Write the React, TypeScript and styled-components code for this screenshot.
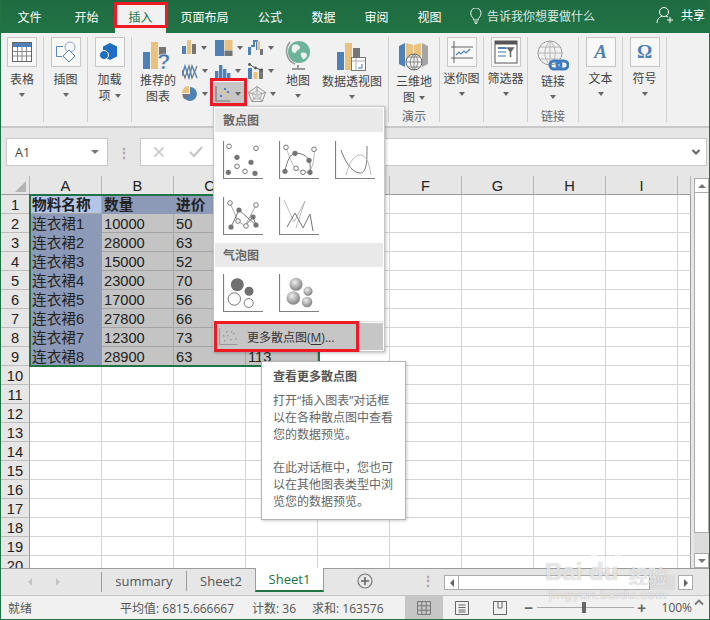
import React from "react";
import styled, { createGlobalStyle } from "styled-components";

const UI = `"Open Sans", "Noto Sans CJK SC", sans-serif`;
const CELL = `"Liberation Sans", "Noto Sans CJK SC", sans-serif`;
const GREEN = "#217346";
const BLUE = "#4f81b8";
const GOLD = "#e9c27f";
const GREY = "#757575";

const Global = createGlobalStyle`
  html, body { margin: 0; padding: 0; background: #fff; }
  * { box-sizing: border-box; }
`;

const Window = styled.div`
  position: relative; width: 710px; height: 620px; overflow: hidden;
  display: flex; flex-direction: column;
  border: 1px solid ${GREEN}; border-top: 0;
  font-family: ${UI}; font-size: 12px; color: #444; background: #e6e6e6;
`;
const TabBar = styled.div`
  height: 33px; flex: none; display: flex; background: ${GREEN}; color: #fff; align-items: stretch;
  background-image: linear-gradient(#1f6b41, ${GREEN});
`;
const Tab = styled.div<{ $w: number; $active?: boolean }>`
  width: ${(p) => p.$w}px; flex: none; display: flex; align-items: center; justify-content: center;
  padding-bottom: 3px; margin-top: 3px;
  background: ${(p) => (p.$active ? "#f1f1f1" : "transparent")};
  color: ${(p) => (p.$active ? GREEN : "#fff")};
`;
const TellMe = styled.div`
  display: flex; align-items: center; gap: 5px; margin-left: 14px; color: #dbe9e0; padding-top: 1px; padding-bottom: 3px;
`;
const Share = styled.div`
  margin-left: auto; display: flex; align-items: center; gap: 7px; padding: 0 4px 3px 0;
`;
const Ribbon = styled.div`
  height: 95px; flex: none; display: flex; padding-top: 4px; background: #f1f1f1;
  border-bottom: 2px solid #c9c9c9;
`;
const Group = styled.div<{ $w: number }>`
  position: relative; width: ${(p) => p.$w}px; flex: none; height: 85px;
  display: flex; flex-direction: column; align-items: center;
  border-right: 1px solid #d0d0d0;
`;
const ChartGroup = styled(Group)`
  flex-direction: row; align-items: flex-start; padding-left: 4px;
`;
const Big = styled.div<{ $w: number }>`
  width: ${(p) => p.$w}px; flex: none; display: flex; flex-direction: column; align-items: center;
`;
const BoxBtn = styled.div`
  width: 30px; height: 30px; display: flex; align-items: center; justify-content: center;
  background: #f8f8f8; border: 1px solid #c6c6c6; flex: none;
`;
const IconSlot = styled.div`
  height: 34px; display: flex; align-items: flex-end; justify-content: center; flex: none;
`;
const RecommendSlot = styled.div`
  height: 34px; padding-top: 5px; flex: none; display: flex; justify-content: center;
`;
const Label = styled.div<{ $top?: number }>`
  margin-top: ${(p) => p.$top ?? 2}px; line-height: 16px; text-align: center; white-space: nowrap; color: #444;
  display: flex; align-items: center; gap: 4px; justify-content: center;
`;
const Caret = styled.i`
  display: block; width: 0; height: 0; flex: none;
  border-left: 3.5px solid transparent; border-right: 3.5px solid transparent; border-top: 4px solid #666;
`;
const BlockCaret = styled(Caret)`
  margin-top: 5px;
`;
const GroupTitle = styled.div`
  position: absolute; bottom: -3px; left: 0; right: 0; text-align: center; line-height: 16px; color: #666;
`;
const SmallGrid = styled.div`
  width: 95px; flex: none; display: grid; grid-template-columns: 33px 33px 29px; grid-auto-rows: 23px;
  margin: -1px 0 0 1px;
`;
const SmallBtn = styled.div<{ $on?: boolean }>`
  display: flex; align-items: center; gap: 4px; padding-left: 1px;
  background: ${(p) => (p.$on ? "#c6c6c6" : "transparent")};
`;
const GlyphA = styled.span`
  font: italic bold 19px "Liberation Serif", serif; color: ${BLUE};
`;
const GlyphO = styled.span`
  font: bold 19px "Liberation Serif", serif; color: ${BLUE};
`;
const Collapse = styled.div`
  position: absolute; right: 5px; bottom: 9px;
`;

const FormulaRow = styled.div`
  height: 48px; flex: none; display: flex; align-items: flex-start; padding: 10px 2px 0 5px; background: #e6e6e6;
`;
const NameBox = styled.div`
  width: 102px; height: 28px; background: #fff; border: 1px solid #c6c6c6; display: flex; align-items: center;
  justify-content: space-between; padding: 0 8px; color: #444; font-size: 12.5px;
`;
const Dots = styled.div`
  width: 32px; flex: none; display: flex; align-items: center; justify-content: center; height: 28px;
  color: #aaa; font-size: 14px; font-weight: bold;
`;
const FormulaBox = styled.div`
  flex: 1; height: 28px; background: #fff; border: 1px solid #c6c6c6; display: flex; align-items: center;
  padding: 0 5px 0 12px; gap: 24px;
`;
const FormulaEnd = styled.span`
  margin-left: auto; display: flex;
`;

const SheetArea = styled.div`
  height: 392px; flex: none; position: relative; display: flex; background: #e6e6e6;
`;
const SheetGrid = styled.div`
  width: 690px; flex: none; display: grid; overflow: hidden; height: 392px; align-content: start;
  grid-template-columns: 29px repeat(9, 72px) 13px; grid-auto-rows: 19px;
  font-family: ${CELL}; font-size: 14.67px; color: #222;
`;
const Corner = styled.div`
  background: #e6e6e6; border-right: 1px solid #b5b5b5; border-bottom: 1px solid #9b9b9b;
  display: flex; align-items: flex-end; justify-content: flex-end; padding: 0 3px 2px 0;
`;
const Triangle = styled.i`
  display: block; width: 0; height: 0; border-left: 11px solid transparent; border-bottom: 11px solid #b4b4b4;
`;
const ColHead = styled.div`
  background: #e6e6e6; border-right: 1px solid #b5b5b5; border-bottom: 1px solid #9b9b9b;
  display: flex; align-items: center; justify-content: center; padding-top: 1px;
`;
const RowHead = styled.div`
  background: #e6e6e6; border-right: 1px solid #9b9b9b; border-bottom: 1px solid #bdbdbd;
  display: flex; align-items: center; justify-content: center; padding-top: 1px;
`;
const Cell = styled.div<{ $bg: string; $line: string; $bold?: boolean }>`
  background: ${(p) => p.$bg}; border-right: 1px solid ${(p) => p.$line}; border-bottom: 1px solid ${(p) => p.$line};
  padding: 1px 0 0 2px; line-height: 18px; white-space: nowrap; overflow: hidden;
  font-weight: ${(p) => (p.$bold ? 700 : 400)};
`;
const EndCell = styled.div`
  background: #fff; border-right: 1px solid #9b9b9b; border-bottom: 1px solid #d4d4d4;
`;
const Selection = styled.div`
  position: absolute; left: 28px; top: 18px; width: 291px; height: 173px; border: 2px solid ${GREEN}; pointer-events: none;
`;
const VScroll = styled.div`
  flex: 1; display: flex; flex-direction: column; padding: 2px 2px 0 3px; position: relative;
`;
const ScrollBtn = styled.div`
  width: 15px; height: 15px; flex: none; background: #fff; border: 1px solid #ababab; display: flex; align-items: center; justify-content: center;
`;
const VThumb = styled.div`
  width: 15px; height: 340px; flex: none; background: #fff; border: 1px solid #ababab; border-top: 0;
`;
const VTrack = styled.div`
  width: 15px; flex: 1; background: #dcdcdc;
`;
const Up = styled.i`
  display: block; width: 0; height: 0; border-left: 4px solid transparent; border-right: 4px solid transparent; border-bottom: 4px solid #777;
`;
const Down = styled(Up)`
  border-bottom: 0; border-top: 4px solid #777;
`;
const Left = styled.i`
  display: block; width: 0; height: 0; border-top: 4px solid transparent; border-bottom: 4px solid transparent; border-right: 4px solid #666;
`;
const Right = styled(Left)`
  border-right: 0; border-left: 4px solid #666;
`;
const SheetBar = styled.div`
  height: 28px; flex: none; display: flex; background: #e6e6e6; border-top: 1px solid #9b9b9b; border-bottom: 1px solid #c6c6c6;
  position: relative; padding-bottom: 3px; align-items: stretch;
`;
const NavArrows = styled.div`
  width: 101px; flex: none; display: flex; align-items: center; gap: 24px; padding-left: 27px; border-right: 1px solid #9b9b9b; margin: 3px 0 0;
  & > i { border-right-color: #c4c4c4; border-left-color: #c4c4c4; }
`;
const SheetTab = styled.div<{ $active?: boolean; $w: number; $sep?: boolean }>`
  width: ${(p) => p.$w}px; flex: none; display: flex; align-items: center; justify-content: center; font-size: 13px;
  color: ${(p) => (p.$active ? GREEN : "#555")};
  background: ${(p) => (p.$active ? "#fff" : "transparent")};
  border-bottom: ${(p) => (p.$active ? `2px solid ${GREEN}` : "2px solid transparent")};
  border-right: ${(p) => (p.$sep ? "1px solid #9b9b9b" : "0")};
  ${(p) => (p.$active ? "margin-top:-1px; margin-bottom: 0; border-left:1px solid #9b9b9b; border-right:1px solid #9b9b9b;" : "margin-top: 2px;")}
`;
const AddSheet = styled.div`
  margin-left: 33px; display: flex; align-items: center;
`;
const VDots = styled.div`
  margin-left: 52px; width: 6px; display: flex; align-items: center; justify-content: center; color: #aaa; font-size: 14px; font-weight: bold;
`;
const HScroll = styled.div`
  position: absolute; left: 443px; top: 6px; width: 249px; height: 15px; display: flex;
`;
const HThumb = styled.div`
  width: 191px; background: #fff; border: 1px solid #ababab; border-left: 0;
`;
const HTrack = styled.div`
  flex: 1; background: #dcdcdc; margin-right: 3px;
`;
const Status = styled.div`
  height: 23px; flex: none; display: flex; align-items: center; background: #f1f1f1; color: #555; padding-left: 7px;
`;
const StatusStat = styled.span<{ $ml: number }>`
  margin-left: ${(p) => p.$ml}px; white-space: nowrap;
`;
const ViewBtn = styled.div<{ $on?: boolean; $ml?: number }>`
  width: 38px; height: 23px; flex: none; display: flex; align-items: center; justify-content: center;
  margin-left: ${(p) => p.$ml ?? 0}px; background: ${(p) => (p.$on ? "#c6c6c6" : "transparent")};
`;
const Zoomer = styled.div`
  display: flex; align-items: center; margin-left: 5px; width: 123px; flex: none; gap: 3px; color: #555;
`;
const ZoomSign = styled.span`
  font: bold 15px "Liberation Sans", sans-serif; color: #666; line-height: 1; width: 10px; text-align: center;
`;
const ZoomTrack = styled.div`
  flex: 1; height: 1px; background: #aaa; position: relative;
`;
const ZoomThumb = styled.i`
  position: absolute; left: 45px; top: -5px; width: 4px; height: 11px; background: #666;
`;
const Percent = styled.span`
  margin-left: 15px; font-size: 12px;
`;

const Menu = styled.div`
  position: absolute; left: 212px; top: 106px; width: 172px; height: 246px; background: #fff;
  border: 1px solid #c6c6c6; box-shadow: 1px 1px 3px rgba(0,0,0,.25); padding-top: 1px; display: flex; flex-direction: column; z-index: 3;
`;
const MenuHeader = styled.div`
  height: 24px; flex: none; background: #e9e9e9; margin: 0 1px; padding-left: 8px; display: flex; align-items: center;
  font-weight: 700; color: #666;
`;
const MenuIcons = styled.div<{ $pt: number; $pb: number }>`
  display: grid; grid-template-columns: repeat(3, 40px); column-gap: 16px; row-gap: 18px;
  padding: ${(p) => p.$pt}px 0 ${(p) => p.$pb}px 9px; flex: none;
`;
const MenuSep = styled.div`
  height: 1px; flex: none; background: #e0e0e0; margin: 0 1px;
`;
const MenuMore = styled.div`
  flex: 1; margin: 1px; background: #c6c6c6; display: flex; align-items: center; gap: 8px; padding-left: 4px; color: #333; white-space: nowrap;
  & u { text-underline-offset: 2px; }
`;
const Tip = styled.div`
  position: absolute; left: 260px; top: 361px; width: 145px; height: 159px; background: #fff; border: 1px solid #b4b4b4;
  box-shadow: 1px 1px 3px rgba(0,0,0,.2); padding: 6px 11px; line-height: 17px; color: #666; z-index: 4;
`;
const TipTitle = styled.div`
  font-weight: 700; color: #555; margin-bottom: 7px;
`;
const TipPara = styled.div`
  margin-bottom: 16px; white-space: nowrap;
`;
const RedBox = styled.div<{ $x: number; $y: number; $w: number; $h: number }>`
  position: absolute; left: ${(p) => p.$x}px; top: ${(p) => p.$y}px; width: ${(p) => p.$w}px; height: ${(p) => p.$h}px;
  border: 3px solid #ed1c24; z-index: 5; pointer-events: none;
`;
const Watermark = styled.div`
  position: absolute; left: 544px; top: 544px; width: 130px; height: 60px; z-index: 6; pointer-events: none;
  color: rgba(255,255,255,.7); text-shadow: 0 0 1px rgba(110,110,110,.55);
`;
const WmBrand = styled.div`
  position: absolute; left: 0; top: 14px; font: bold 24px "Liberation Sans", sans-serif; line-height: 28px; white-space: nowrap;
`;
const WmCn = styled.div`
  position: absolute; left: 84px; top: 22px; font: bold 19px "Noto Sans CJK SC", sans-serif; white-space: nowrap; line-height: 20px;
`;
const WmUrl = styled.div`
  position: absolute; left: 4px; top: 43px; font: 13px "Liberation Sans", sans-serif; line-height: 15px; letter-spacing: .8px; white-space: nowrap;
`;
const WmPaw = styled.svg`
  position: absolute; left: 40px; top: 0;
`;

/* ---------- icons ---------- */
const I = ({ s = 16, h, children }: { s?: number; h?: number; children: React.ReactNode }) => (
  <svg width={s} height={h ?? s} viewBox={`0 0 ${s} ${h ?? s}`} fill="none">{children}</svg>
);
const TableIcon = () => (
  <I s={22}>
    <rect x="1.5" y="1.5" width="19" height="19" fill="#fff" stroke="#666" />
    <rect x="2" y="2" width="18" height="4" fill="#4f81b8" />
    <path d="M2 10.5h18M2 15h18M6.5 6v14M11 6v14M15.5 6v14" stroke="#888" />
  </I>
);
const ShapesIcon = () => (
  <I s={22}>
    <path d="M8 5.5H1.5v10H7" stroke="#5b88b8" />
    <circle cx="15" cy="6" r="5" stroke="#8cabcb" />
    <path d="M14 9l6 6-6 6-6-6z" fill="#fff" stroke="#4f81b8" />
  </I>
);
const AddinIcon = () => (
  <I s={22}>
    <path d="M11 2l7 3.5v10L11 19l-7-3.5v-10z" fill="#1f6fc0" />
    <circle cx="5" cy="14" r="4.5" fill="#1f6fc0" stroke="#f8f8f8" />
  </I>
);
const RecommendIcon = () => (
  <I s={30} h={28}>
    <rect x="0" y="10" width="7" height="17" fill={BLUE} />
    <rect x="8" y="0" width="7" height="27" fill={GOLD} />
    <rect x="16" y="5" width="7" height="8" fill={GREY} />
    <text x="14" y="27" fontFamily="Liberation Sans" fontWeight="700" fontSize="22" fill="#3f75ad" stroke="#f1f1f1" strokeWidth=".5">?</text>
  </I>
);
const Bars = () => (
  <I s={15}>
    <rect x="0" y="6" width="4" height="8" fill={BLUE} />
    <rect x="5" y="0" width="4" height="14" fill={GOLD} />
    <rect x="10" y="4" width="4" height="10" fill={GREY} />
  </I>
);
const Tree = () => (
  <I s={18} h={16}>
    <rect x="0" y="0" width="9" height="16" fill={BLUE} />
    <rect x="9.5" y="0" width="8" height="10" fill={GOLD} />
    <rect x="9.5" y="10.5" width="8" height="5.5" fill={GREY} />
  </I>
);
const Water = () => (
  <I s={16}>
    <rect x="0" y="7" width="3" height="8" fill={BLUE} />
    <path d="M3 6h3V1h3v9" stroke={BLUE} strokeWidth="2" fill="none" />
    <rect x="9" y="1" width="3" height="9" fill={GOLD} />
    <rect x="12" y="9" width="3" height="6" fill={GREY} />
  </I>
);
const LineZ = () => (
  <I s={16} h={18}>
    <path d="M0 8l3 8 4-12 3 12 5-12" stroke={GREY} strokeWidth="1.2" />
    <path d="M0 14l3-10 4 12 3-12 5 12" stroke={BLUE} strokeWidth="1.4" />
  </I>
);
const Hist = () => (
  <I s={16}>
    <rect x="0" y="8" width="3.4" height="7" fill={BLUE} />
    <rect x="4" y="2" width="3.4" height="13" fill={BLUE} />
    <rect x="8" y="6" width="3.4" height="9" fill={BLUE} />
    <rect x="12" y="10" width="3.4" height="5" fill={BLUE} />
  </I>
);
const Combo = () => (
  <I s={16}>
    <rect x="0" y="5" width="4" height="11" fill={BLUE} />
    <rect x="5.5" y="9" width="4" height="7" fill={GOLD} />
    <rect x="11" y="6" width="4" height="10" fill={GREY} />
    <path d="M1 1l6 4 7 2" stroke="#555" strokeWidth="1" />
    <circle cx="1.5" cy="1.5" r="1.4" fill="#555" /><circle cx="7.5" cy="5" r="1.4" fill="#555" /><circle cx="13.5" cy="7" r="1.4" fill="#555" />
  </I>
);
const Pie = () => (
  <I s={16}>
    <path d="M8 8V1a7 7 0 1 1-7 7.5z" fill={BLUE} />
    <path d="M7 7V0a7 7 0 0 0-7 7z" fill={GOLD} />
    <path d="M0.4 8H7l-4.5 5.3A7 7 0 0 1 .4 8z" fill={GREY} />
  </I>
);
const ScatterSmall = () => (
  <I s={16}>
    <path d="M1 0v15h14" stroke="#777" strokeWidth="1.2" />
    <rect x="5" y="4" width="2" height="2" fill={GOLD} />
    <rect x="9" y="2" width="2" height="2" fill={BLUE} />
    <rect x="12" y="5" width="2" height="2" fill={BLUE} />
    <rect x="5" y="9" width="2" height="2" fill={BLUE} />
    <rect x="9" y="6" width="2" height="2" fill={GOLD} />
    <rect x="12" y="9" width="2" height="2" fill={GOLD} />
  </I>
);
const Radar = () => (
  <I s={18} h={16}>
    <path d="M9 .5l8.500 6-3.200 9H3.700L.5 6.500z" stroke="#8a8a8a" strokeWidth=".9" />
    <path d="M9 4l5 3.500-1.900 5.500H5.900L4 7.500z" stroke="#a0a0a0" strokeWidth=".8" />
    <path d="M9 .5V9M17.500 6.500L9 9M14.300 15.500L9 9M3.700 15.500L9 9M.5 6.500L9 9" stroke="#8a8a8a" strokeWidth=".8" />
    <path d="M9 7l2.500 2-1 2.500h-3l-1-2.500z" fill="#c8c8c8" />
  </I>
);
const Globe = ({ size = 26 }: { size?: number }) => (
  <svg width={size} height={size + 6} viewBox="0 0 26 32" fill="none">
    <circle cx="14" cy="13" r="11" fill="#6db39a" />
    <path d="M8 6c4-2 6 0 7 2s-3 3-4 5-3 1-4-1 0-5 1-6zM16 14c3-1 6 0 6 2s-3 5-4 4-3-5-2-6z" fill="#f1f1f1" />
    <path d="M5 3C-1 10 1 21 10 25" stroke="#999" strokeWidth="1.6" />
    <path d="M13 26v3M7 30h13" stroke="#999" strokeWidth="2" />
  </svg>
);
const PivotIcon = () => (
  <I s={30} h={28}>
    <rect x="0" y="9" width="7" height="18" fill={BLUE} />
    <rect x="8" y="0" width="7" height="27" fill={GOLD} />
    <rect x="16" y="5" width="7" height="9" fill={GREY} />
    <rect x="14.5" y="14.5" width="14" height="13" fill="#fff" stroke="#777" />
    <path d="M15 18h13M19 15v12" stroke="#aaa" />
    <path d="M21 25h4v-4" stroke="#3f75ad" />
  </I>
);
const Map3D = () => (
  <I s={30} h={29}>
    <path d="M0 4l6-3v24l-6-3z" fill={BLUE} />
    <path d="M7 1l7 2v18H7z" fill={GOLD} />
    <path d="M15 3l7-2v20h-7z" fill={GOLD} />
    <path d="M23 1l6 3v18l-6 3z" fill="#a5a5a5" />
    <circle cx="15" cy="20" r="8" fill="#f1f1f1" stroke="#666" />
    <path d="M7 20h16M15 12v16M9 15h12M9 25h12M15 12c-5 5-5 11 0 16M15 12c5 5 5 11 0 16" stroke="#777" strokeWidth=".8" />
  </I>
);
const Spark = () => (
  <I s={22}>
    <path d="M3 0v22M0 6h22M0 17h22" stroke="#555" strokeWidth=".9" />
    <path d="M5 14l3-3 2 2 3-3 2 2 4-4" stroke="#4f81b8" strokeWidth="1.1" />
  </I>
);
const Slicer = () => (
  <I s={24}>
    <rect x="1" y="1" width="22" height="22" fill="#fff" stroke="#555" />
    <rect x="1" y="1" width="22" height="3.5" fill="#555" />
    <rect x="4" y="7" width="12" height="2" fill="#4f81b8" />
    <rect x="4" y="11" width="8" height="2" fill="#9dbbd8" />
    <rect x="4" y="15" width="8" height="2" fill="#9dbbd8" />
    <path d="M12 7h9l-3.5 5v6l-2-1v-5z" fill="#666" stroke="#fff" strokeWidth=".5" />
  </I>
);
const LinkIcon = () => (
  <I s={32} h={31}>
    <circle cx="13" cy="13" r="12" stroke="#999" fill="#f1f1f1" />
    <path d="M1 13h24M13 1v24M3 7h20M3 19h20M13 1c-7 7-7 17 0 24M13 1c7 7 7 17 0 24" stroke="#aaa" strokeWidth=".8" />
    <rect x="13" y="21" width="11" height="8" rx="4" fill="none" stroke="#3f7cbd" strokeWidth="3" />
    <rect x="20" y="21" width="11" height="8" rx="4" fill="none" stroke="#3f7cbd" strokeWidth="3" />
  </I>
);
const Bulb = () => (
  <I s={12} h={16}>
    <path d="M3.500 10.500C1 8.500.8 6 .8 5a5 5 0 0 1 10.200 0c0 1-.3 3.500-2.700 5.500V12H3.500z" stroke="#e9f1ec" />
    <path d="M4 14h4M5 15.500h2" stroke="#e9f1ec" />
  </I>
);
const User = () => (
  <I s={18}>
    <circle cx="8" cy="6" r="4.500" stroke="#fff" />
    <path d="M1 17c0-4 2.500-6 5-7M10 10l2 1M14 11v6M11 14h6" stroke="#fff" />
  </I>
);
const XMark = () => (
  <I s={12}><path d="M1.500 1.500l9 9M10.500 1.500l-9 9" stroke="#c4c4c4" strokeWidth="1.600" /></I>
);
const Check = () => (
  <I s={14} h={12}><path d="M1 6l4 4 8-9" stroke="#c4c4c4" strokeWidth="2" /></I>
);
const Chevron = () => (
  <I s={10} h={7}><path d="M1.500 1l3.500 3.500L8.500 1" stroke="#666" strokeWidth="2" /></I>
);
const Plus = () => (
  <I s={16}>
    <circle cx="8" cy="8" r="7" stroke="#777" strokeWidth="1.200" />
    <path d="M8 4v8M4 8h8" stroke="#666" strokeWidth="1.600" />
  </I>
);
const NormalView = () => (
  <I s={14}><path d="M.5.5h13v13H.5zM.5 4.800h13M.5 9.200h13M4.800.5v13M9.200.5v13" stroke="#777" /></I>
);
const LayoutView = () => (
  <I s={14}><path d="M.5.5h13v13H.5z" stroke="#666" /><path d="M3.500 4h7M3.500 6.500h7M3.500 9h7M3.500 11h7" stroke="#666" /></I>
);
const PageView = () => (
  <I s={14}><path d="M.5 13.500V.5h13v13zM5 .5V7h4V.5" stroke="#666" /></I>
);

const Axes = () => <path d="M.5 0v37.500h40" stroke="#808080" strokeWidth="1.200" />;
const Open = ({ x, y }: { x: number; y: number }) => <circle cx={x} cy={y} r="2.300" fill="#fff" stroke="#777" />;
const Dot = ({ x, y }: { x: number; y: number }) => <circle cx={x} cy={y} r="2.600" fill="#757575" />;
const MI = ({ children }: { children: React.ReactNode }) => (
  <svg width="40" height="38" viewBox="0 0 40 38" fill="none"><Axes />{children}</svg>
);
const Scatter1 = () => (
  <MI>
    <Open x={6} y={5.300} /><Open x={33} y={7.300} /><Open x={14} y={25.300} /><Open x={22} y={30.300} />
    <Dot x={14} y={16.300} /><Dot x={28} y={21.300} /><Dot x={5.300} y={31.300} /><Dot x={32} y={32.300} />
  </MI>
);
const Scatter2 = () => (
  <MI>
    <path d="M7 6.300c3 8 6 18 10 21s11 6 14 2 5-14 4-21" stroke="#bbb" />
    <path d="M6 30.300C8 20 11 13 16 12.300s12 2 14 7 1 10 1 12" stroke="#777" />
    <Open x={7} y={6.300} /><Open x={35} y={8.300} /><Open x={17} y={27.300} /><Open x={24} y={31.300} />
    <Dot x={6} y={30.300} /><Dot x={16} y={12.300} /><Dot x={30} y={19.300} /><Dot x={31} y={31.300} />
  </MI>
);
const Scatter3 = () => (
  <MI>
    <path d="M6 9c3 9 10 22 18 23s8-12 8-27" stroke="#777" />
    <path d="M11 34c3-12 8-20 14-20s9 7 11 20" stroke="#bbb" />
  </MI>
);
const Scatter4 = () => (
  <MI>
    <path d="M7 6l8 18 7 5 11-21" stroke="#aaa" />
    <path d="M8 30l8-17 17 15-3-8-9 10" stroke="#777" />
    <Open x={7} y={6} /><Open x={33} y={8} /><Open x={15} y={24} /><Open x={23} y={29} />
    <Dot x={8} y={30} /><Dot x={16} y={13} /><Dot x={30} y={20} /><Dot x={33} y={28} />
  </MI>
);
const Scatter5 = () => (
  <MI>
    <path d="M5 3l10 22 11-21-9 27" stroke="#bbb" />
    <path d="M8 30l8-14 8 15 7-14 3 17" stroke="#777" />
  </MI>
);
const Bubble1 = () => (
  <MI>
    <circle cx="14.300" cy="10.700" r="6.500" fill="#707070" />
    <circle cx="26" cy="17.300" r="4.500" fill="#707070" />
    <circle cx="11.300" cy="25" r="6.200" fill="#fff" stroke="#777" />
    <circle cx="25.700" cy="29" r="4.500" fill="#fff" stroke="#777" />
  </MI>
);
const Bubble3D = () => (
  <svg width="40" height="38" viewBox="0 0 40 38" fill="none">
    <defs>
      <radialGradient id="sp" cx=".4" cy=".35" r=".7">
        <stop offset="0" stopColor="#eee" /><stop offset="1" stopColor="#7a7a7a" />
      </radialGradient>
    </defs>
    <Axes />
    <circle cx="17" cy="10.300" r="6.500" fill="url(#sp)" />
    <circle cx="29" cy="17.300" r="4.500" fill="url(#sp)" />
    <circle cx="14.300" cy="24" r="6.800" fill="url(#sp)" />
    <circle cx="28" cy="28" r="5.300" fill="url(#sp)" />
  </svg>
);
const MoreIcon = () => (
  <svg width="20" height="18" viewBox="0 0 20 18" fill="none">
    <path d="M.5 0v16.500h18" stroke="#999" />
    {[[5,12],[8,7],[11,11],[14,5],[16,10],[7,3],[12,3],[4,7]].map(([x,y],i)=>(<rect key={i} x={x} y={y} width="1.500" height="1.500" fill="#999" />))}
  </svg>
);

/* ---------- data ---------- */
const tabs: [string, number][] = [["文件",57],["开始",57],["插入",51],["页面布局",77],["公式",54],["数据",53],["审阅",53],["视图",53]];
const cols = ["A","B","C","D","E","F","G","H","I"];
const data: string[][] = [
  ["物料名称","数量","进价",""],
  ["连衣裙1","10000","50",""],
  ["连衣裙2","28000","63",""],
  ["连衣裙3","15000","52",""],
  ["连衣裙4","23000","70",""],
  ["连衣裙5","17000","56",""],
  ["连衣裙6","27800","66",""],
  ["连衣裙7","12300","73",""],
  ["连衣裙8","28900","63","113"],
];
const smalls = [<Bars/>,<Tree/>,<Water/>,<LineZ/>,<Hist/>,<Combo/>,<Pie/>,<ScatterSmall/>,<Radar/>];

const cellLook = (r: number, c: number) => {
  if (r > 8 || c > 3) return { bg: "#fff", line: "#d4d4d4" };
  if (r === 0 && c === 0) return { bg: "#b4c6e7", line: "#a5a5a5" };
  if (r === 0 || c === 0) return { bg: "#8c9ab8", line: "#8c9ab8" };
  return { bg: "#c4c4c4", line: "#a5a5a5" };
};

export default function App() {
  return (
    <Window>
      <Global />
      <TabBar>
        {tabs.map(([t, w]) => <Tab key={t} $w={w} $active={t === "插入"}>{t}</Tab>)}
        <TellMe><Bulb />告诉我你想要做什么</TellMe>
        <Share><User />共享</Share>
      </TabBar>
      <Ribbon>
        <Group $w={43}><BoxBtn><TableIcon /></BoxBtn><Label $top={5}>表格</Label><BlockCaret /></Group>
        <Group $w={44}><BoxBtn><ShapesIcon /></BoxBtn><Label $top={5}>插图</Label><BlockCaret /></Group>
        <Group $w={44}><BoxBtn><AddinIcon /></BoxBtn><Label $top={5}>加载</Label><Label $top={0}>项<Caret /></Label></Group>
        <ChartGroup $w={257}>
          <Big $w={44}><RecommendSlot><RecommendIcon /></RecommendSlot><Label $top={2}>推荐的</Label><Label $top={0}>图表</Label></Big>
          <SmallGrid>
            {smalls.map((ic, i) => <SmallBtn key={i} $on={i === 7}>{ic}<Caret /></SmallBtn>)}
          </SmallGrid>
          <Big $w={44}><IconSlot><Globe /></IconSlot><Label $top={2}>地图</Label><BlockCaret /></Big>
          <Big $w={64}><IconSlot><PivotIcon /></IconSlot><Label $top={3}>数据透视图</Label><BlockCaret /></Big>
        </ChartGroup>
        <Group $w={51}><IconSlot><Map3D /></IconSlot><Label $top={3}>三维地</Label><Label $top={0}>图<Caret /></Label><GroupTitle>演示</GroupTitle></Group>
        <Group $w={44}><BoxBtn><Spark /></BoxBtn><Label $top={4}>迷你图</Label><BlockCaret /></Group>
        <Group $w={44}><BoxBtn><Slicer /></BoxBtn><Label $top={4}>筛选器</Label><BlockCaret /></Group>
        <Group $w={51}><IconSlot><LinkIcon /></IconSlot><Label $top={3}>链接</Label><BlockCaret /><GroupTitle>链接</GroupTitle></Group>
        <Group $w={44}><BoxBtn><GlyphA>A</GlyphA></BoxBtn><Label $top={4}>文本</Label><BlockCaret /></Group>
        <Group $w={44}><BoxBtn><GlyphO>Ω</GlyphO></BoxBtn><Label $top={4}>符号</Label><BlockCaret /></Group>
        <Collapse><svg width="10" height="7" viewBox="0 0 10 7" fill="none"><path d="M1 5.500L5 1.500l4 4" stroke="#777" strokeWidth="1.800" /></svg></Collapse>
      </Ribbon>
      <FormulaRow>
        <NameBox>A1<Down /></NameBox>
        <Dots>⋮</Dots>
        <FormulaBox>
          <XMark /><Check />
          <FormulaEnd><Chevron /></FormulaEnd>
        </FormulaBox>
      </FormulaRow>
      <SheetArea>
        <SheetGrid>
          <Corner><Triangle /></Corner>
          {cols.map((c) => <ColHead key={c}>{c}</ColHead>)}
          <ColHead />
          {Array.from({ length: 20 }, (_, r) => (
            <React.Fragment key={r}>
              <RowHead>{r + 1}</RowHead>
              {cols.map((_, c) => {
                const look = cellLook(r, c);
                return <Cell key={c} $bg={look.bg} $line={look.line} $bold={r === 0}>{data[r]?.[c] ?? ""}</Cell>;
              })}
              <EndCell />
            </React.Fragment>
          ))}
        </SheetGrid>
        <Selection />
        <VScroll>
          <ScrollBtn><Up /></ScrollBtn>
          <VThumb />
          <VTrack />
          <ScrollBtn><Down /></ScrollBtn>
        </VScroll>
      </SheetArea>
      <SheetBar>
        <NavArrows><Left /><Right /></NavArrows>
        <SheetTab $w={85} $sep>summary</SheetTab>
        <SheetTab $w={68}>Sheet2</SheetTab>
        <SheetTab $w={69} $active>Sheet1</SheetTab>
        <AddSheet><Plus /></AddSheet>
        <VDots>⋮</VDots>
        <HScroll>
          <ScrollBtn><Left /></ScrollBtn>
          <HThumb />
          <HTrack />
          <ScrollBtn><Right /></ScrollBtn>
        </HScroll>
      </SheetBar>
      <Status>
        就绪
        <StatusStat $ml={88}>平均值: 6815.666667</StatusStat>
        <StatusStat $ml={18}>计数: 36</StatusStat>
        <StatusStat $ml={16}>求和: 163576</StatusStat>
        <ViewBtn $on $ml={21}><NormalView /></ViewBtn>
        <ViewBtn><LayoutView /></ViewBtn>
        <ViewBtn><PageView /></ViewBtn>
        <Zoomer><ZoomSign>−</ZoomSign><ZoomTrack><ZoomThumb /></ZoomTrack><ZoomSign>+</ZoomSign></Zoomer>
        <Percent>100%</Percent>
      </Status>

      <Menu>
        <MenuHeader>散点图</MenuHeader>
        <MenuIcons $pt={9} $pb={8}><Scatter1 /><Scatter2 /><Scatter3 /><Scatter4 /><Scatter5 /></MenuIcons>
        <MenuHeader>气泡图</MenuHeader>
        <MenuIcons $pt={7} $pb={9}><Bubble1 /><Bubble3D /></MenuIcons>
        <MenuSep />
        <MenuMore><MoreIcon /><span>更多散点图(<u>M</u>)...</span></MenuMore>
      </Menu>
      <Tip>
        <TipTitle>查看更多散点图</TipTitle>
        <TipPara>打开“插入图表”对话框<br />以在各种散点图中查看<br />您的数据预览。</TipPara>
        <TipPara>在此对话框中，您也可<br />以在其他图表类型中浏<br />览您的数据预览。</TipPara>
      </Tip>
      <RedBox $x={113} $y={2} $w={54} $h={26} />
      <RedBox $x={209} $y={78} $w={37} $h={28} />
      <RedBox $x={213} $y={321} $w={145} $h={31} />
      <Watermark>
        <WmPaw width="40" height="30" viewBox="0 0 40 30" fill="rgba(255,255,255,.6)">
          <ellipse cx="9" cy="12" rx="3.500" ry="5" /><ellipse cx="17" cy="5" rx="3.500" ry="5" />
          <ellipse cx="26" cy="6" rx="3.500" ry="5" /><ellipse cx="33" cy="14" rx="3.500" ry="5" />
          <path d="M21 13c5 0 9 6 9 11s-5 5-9 4-9 1-10-4 5-11 10-11z" />
        </WmPaw>
        <WmBrand>Bai du</WmBrand>
        <WmCn>经验</WmCn>
        <WmUrl>jingyan.baidu.com</WmUrl>
      </Watermark>
    </Window>
  );
}
